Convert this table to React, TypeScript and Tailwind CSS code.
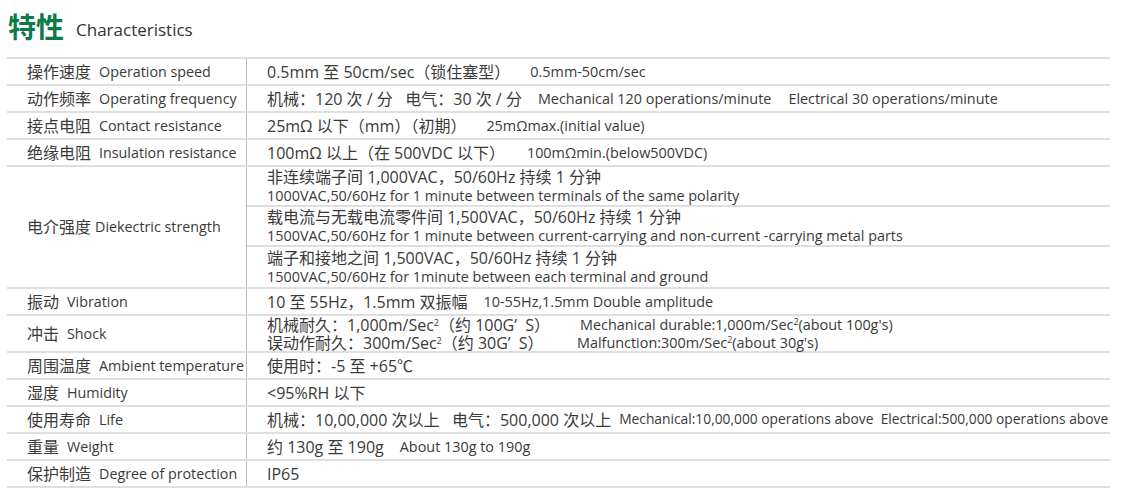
import React from 'react'

const font = { fontFamily: '"Open Sans", "Noto Sans CJK SC", sans-serif' }

type Row = { label: string; en: string; body: React.ReactNode; h?: string }

const Sup = () => <sup className="text-[9px]">2</sup>

const rows: Row[] = [
  {
    label: '操作速度',
    en: 'Operation speed',
    body: (
      <>
        <span>0.5mm 至 50cm/sec（锁住塞型）</span>
        <span className="ml-5 text-[14.4px]">0.5mm-50cm/sec</span>
      </>
    ),
  },
  {
    label: '动作频率',
    en: 'Operating frequency',
    body: (
      <>
        <span>机械：120 次 / 分&nbsp;&nbsp; 电气：30 次 / 分</span>
        <span className="ml-[16px] text-[14.4px]">Mechanical 120 operations/minute</span>
        <span className="ml-[17px] text-[14.4px]">Electrical 30 operations/minute</span>
      </>
    ),
  },
  {
    label: '接点电阻',
    en: 'Contact resistance',
    body: (
      <>
        <span>25mΩ 以下（mm）（初期）</span>
        <span className="ml-5 text-[14.4px]">25mΩmax.(initial value)</span>
      </>
    ),
  },
  {
    label: '绝缘电阻',
    en: 'Insulation resistance',
    body: (
      <>
        <span>100mΩ 以上（在 500VDC 以下）</span>
        <span className="ml-[22px] text-[14.4px]">100mΩmin.(below500VDC)</span>
      </>
    ),
  },
]

const dielectric = [
  ['非连续端子间 1,000VAC，50/60Hz 持续 1 分钟', '1000VAC,50/60Hz for 1 minute between terminals of the same polarity'],
  ['载电流与无载电流零件间 1,500VAC，50/60Hz 持续 1 分钟', '1500VAC,50/60Hz for 1 minute between current-carrying and non-current -carrying metal parts'],
  ['端子和接地之间 1,500VAC，50/60Hz 持续 1 分钟', '1500VAC,50/60Hz for 1minute between each terminal and ground'],
]

const rows2: Row[] = [
  {
    label: '振动',
    en: 'Vibration',
    body: (
      <>
        <span>10 至 55Hz，1.5mm 双振幅</span>
        <span className="ml-4 text-[14.4px]">10-55Hz,1.5mm Double amplitude</span>
      </>
    ),
  },
  {
    label: '冲击',
    en: 'Shock',
    h: 'h-[37px]',
    body: (
      <div className="flex flex-col leading-[18px]">
        <div className="flex items-center h-[18px]">
          <span className="w-[313px] shrink-0 whitespace-nowrap">机械耐久：1,000m/Sec<Sup />（约 100G’&nbsp; S）</span>
          <span className="text-[14.4px] whitespace-nowrap">Mechanical durable:1,000m/Sec<Sup />(about 100g's)</span>
        </div>
        <div className="flex items-center h-[18px]">
          <span className="w-[310px] shrink-0 whitespace-nowrap">误动作耐久：300m/Sec<Sup />（约 30G’&nbsp; S）</span>
          <span className="text-[14.4px] whitespace-nowrap">Malfunction:300m/Sec<Sup />(about 30g's)</span>
        </div>
      </div>
    ),
  },
  { label: '周围温度', en: 'Ambient temperature', body: <span>使用时：-5 至 +65℃</span> },
  { label: '湿度', en: 'Humidity', body: <span>&lt;95%RH 以下</span> },
  {
    label: '使用寿命',
    en: 'Life',
    body: (
      <>
        <span>机械：10,00,000 次以上&nbsp;&nbsp; 电气：500,000 次以上</span>
        <span className="ml-2 text-[13.8px]">Mechanical:10,00,000 operations above&nbsp; Electrical:500,000 operations above</span>
      </>
    ),
  },
  {
    label: '重量',
    en: 'Weight',
    body: (
      <>
        <span>约 130g 至 190g</span>
        <span className="ml-4 text-[14.4px]">About 130g to 190g</span>
      </>
    ),
  },
  { label: '保护制造', en: 'Degree of protection', body: <span>IP65</span> },
]

function Line({ row }: { row: Row }) {
  return (
    <div className={`flex border-b-2 border-[#dfdfdf] ${row.h ?? 'h-[27px]'}`}>
      <div className="w-[240px] shrink-0 flex items-center pl-5 border-r border-[#bdbdbd] whitespace-nowrap">
        <span className="text-[16px]">{row.label}</span>
        <span className="ml-2 text-[14.3px]">{row.en}</span>
      </div>
      <div className="flex-1 flex items-center pl-5 text-[16px] whitespace-nowrap">{row.body}</div>
    </div>
  )
}

export default function App() {
  return (
    <div className="w-[1140px] h-[500px] bg-white text-[#3a3a3a]" style={font}>
      <div className="flex items-end h-[41px] pl-2">
        <h1 className="text-[28px] leading-none text-[#0d7a48] font-semibold">特性</h1>
        <span className="ml-[12px] text-[17px] leading-none mb-[3px] text-[#333]">Characteristics</span>
      </div>
      <div className="ml-[7px] w-[1103px] mt-[16px] border-t-2 border-[#dfdfdf]">
        {rows.map((r) => (
          <Line key={r.label} row={r} />
        ))}
        <div className="flex border-b-2 border-[#dfdfdf]">
          <div className="w-[240px] shrink-0 flex items-center pl-5 border-r border-[#bdbdbd] whitespace-nowrap">
            <span className="text-[16px]">电介强度</span>
            <span className="ml-1 text-[14.3px]">Diekectric strength</span>
          </div>
          <div className="flex-1 flex flex-col">
            {dielectric.map(([zh, en], i) => (
              <div
                key={zh}
                className={`h-[40px] flex flex-col justify-center pl-5 whitespace-nowrap ${i < 2 ? 'border-b-2 border-[#dfdfdf]' : ''}`}
              >
                <span className="text-[16px] leading-[19px]">{zh}</span>
                <span className="text-[14.4px] leading-[17px]">{en}</span>
              </div>
            ))}
          </div>
        </div>
        {rows2.map((r) => (
          <Line key={r.label} row={r} />
        ))}
      </div>
    </div>
  )
}
